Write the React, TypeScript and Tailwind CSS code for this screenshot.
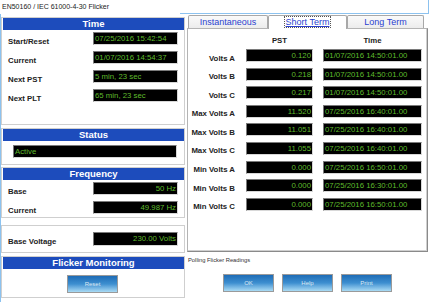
const timeRows = [
  ["Start/Reset", "07/25/2016 15:42:54"],
  ["Current", "01/07/2016 14:54:37"],
  ["Next PST", "5 min, 23 sec"],
  ["Next PLT", "65 min, 23 sec"],
];

const stRows = [
  ["Volts A", "0.120", "01/07/2016 14:50:01.00"],
  ["Volts B", "0.218", "01/07/2016 14:50:01.00"],
  ["Volts C", "0.217", "01/07/2016 14:50:01.00"],
  ["Max Volts A", "11.520", "07/25/2016 16:40:01.00"],
  ["Max Volts B", "11.051", "07/25/2016 16:40:01.00"],
  ["Max Volts C", "11.055", "07/25/2016 16:40:01.00"],
  ["Min Volts A", "0.000", "07/25/2016 16:50:01.00"],
  ["Min Volts B", "0.000", "07/25/2016 16:30:01.00"],
  ["Min Volts C", "0.000", "07/25/2016 16:50:01.00"],
];

function Header({ title }: { title: string }) {
  return (
    <div className="h-[12px] bg-[#1d4cbc] text-white font-bold text-[9.5px] leading-[12px] text-center">
      {title}
    </div>
  );
}

function Readout({
  value,
  right,
  className,
}: {
  value: string;
  right?: boolean;
  className: string;
}) {
  return (
    <div
      className={`bg-black border border-t-[#7a7a7a] border-l-[#7a7a7a] border-b-[#d8d8d8] border-r-[#d8d8d8] text-[#5fba2c] text-[7.8px] leading-[11px] px-px whitespace-nowrap overflow-hidden ${
        right ? "text-right" : "text-left"
      } ${className}`}
    >
      {value}
    </div>
  );
}

function Label({ text }: { text: string }) {
  return <span className="font-bold text-[7.8px] text-[#222]">{text}</span>;
}

function BlueButton({ label }: { label: string }) {
  return (
    <button className="w-[51px] h-[18px] border border-[#9a9a9a] bg-gradient-to-b from-[#1e6cb6] via-[#3d8fd0] to-[#a9dbf4] text-[#dde8f2] text-[6px] leading-none">
      {label}
    </button>
  );
}

export default function App() {
  return (
    <div className="relative w-[429px] h-[302px] bg-white overflow-hidden font-['Liberation_Sans',Arial,sans-serif] text-[#111]">
      {/* window edges */}
      <div className="absolute left-0 top-[14px] w-px h-[288px] bg-[#8cc2ef]" />
      <div className="absolute left-[180px] top-[13px] w-[249px] h-px bg-[#8cc2ef]" />
      <div className="absolute right-0 top-0 w-px h-[14px] bg-[#8cc2ef]" />

      <div className="h-[14px] pl-[2px] text-[7px] leading-[14px] text-[#222]">
        EN50160 / IEC 61000-4-30 Flicker
      </div>

      <div className="flex">
        {/* left column */}
        <div className="w-[184px] ml-px pt-[3px] flex flex-col">
          <div className="h-[108px] border border-[#cfcfcf] pl-px">
            <Header title="Time" />
            <div className="flex flex-col gap-[6px] pt-[2px]">
              {timeRows.map(([l, v]) => (
                <div key={l} className="flex items-center h-[13px] pl-[5px]">
                  <div className="w-[85px]">
                    <Label text={l} />
                  </div>
                  <Readout value={v} className="w-[85px] h-[13px]" />
                </div>
              ))}
            </div>
          </div>

          <div className="h-[37px] mt-[3px] border border-[#cfcfcf] pl-px">
            <Header title="Status" />
            <div className="pt-[4px] pl-[10px]">
              <Readout value="Active" className="w-[164px] h-[13px]" />
            </div>
          </div>

          <div className="h-[51px] mt-[2px] border border-[#cfcfcf] pl-px">
            <Header title="Frequency" />
            <div className="flex flex-col gap-[6px] pt-[2px]">
              {[
                ["Base", "50 Hz"],
                ["Current", "49.987 Hz"],
              ].map(([l, v]) => (
                <div key={l} className="flex items-center h-[13px] pl-[5px]">
                  <div className="w-[85px]">
                    <Label text={l} />
                  </div>
                  <Readout value={v} right className="w-[85px] h-[13px]" />
                </div>
              ))}
            </div>
          </div>

          <div className="h-[28px] mt-[7px] border border-[#cfcfcf] flex items-center pl-[6px]">
            <div className="w-[85px]">
              <Label text="Base Voltage" />
            </div>
            <Readout value="230.00 Volts" right className="w-[85px] h-[14px]" />
          </div>

          <div className="h-[42px] mt-[3px] border border-[#cfcfcf] pl-px">
            <Header title="Flicker Monitoring" />
            <div className="flex justify-center pt-[6px] pr-[2px]">
              <BlueButton label="Reset" />
            </div>
          </div>
        </div>

        {/* right column */}
        <div className="w-[241px] ml-[2px] flex flex-col">
          <div className="flex h-[14px] items-end pl-px">
            <div className="w-[80px] h-[13px] border border-b-0 border-[#a8a8a8] rounded-t-[2px] bg-gradient-to-b from-[#fafafa] to-[#ececec] text-[#2a3fd0] text-[9px] leading-[12px] text-center">
              Instantaneous
            </div>
            <div className="w-[79px] h-[14px] border border-b-0 border-[#a8a8a8] rounded-t-[2px] bg-white text-[#2a3fd0] text-[9px] leading-[13px] text-center relative z-10 -mb-px">
              <span className="underline outline outline-1 outline-dotted outline-[#555] px-px">
                Short Term
              </span>
            </div>
            <div className="w-[77px] h-[13px] border border-b-0 border-[#a8a8a8] rounded-t-[2px] bg-gradient-to-b from-[#fafafa] to-[#ececec] text-[#2a3fd0] text-[9px] leading-[12px] text-center">
              Long Term
            </div>
          </div>
          <div className="h-[224px] border border-[#b4b4b4] border-r-[#8a8a8a] border-b-[#8a8a8a] shadow-[inset_-1px_-1px_0_#cfcfcf]">
            <div className="flex h-[20px] items-center font-bold text-[7.8px] text-[#222] pt-[4px]">
              <div className="w-[58px]" />
              <div className="w-[67px] text-center">PST</div>
              <div className="w-[10px]" />
              <div className="w-[99px] text-center">Time</div>
            </div>
            <div className="flex flex-col gap-[5.6px]">
              {stRows.map(([l, p, t]) => (
                <div key={l} className="flex items-center h-[13px]">
                  <div className="w-[47px] text-right whitespace-nowrap">
                    <Label text={l} />
                  </div>
                  <div className="w-[11px]" />
                  <Readout value={p} right className="w-[67px] h-[13px]" />
                  <div className="w-[10px]" />
                  <Readout value={t} className="w-[99px] h-[13px]" />
                </div>
              ))}
            </div>
          </div>
          <div className="h-[14px] pl-px pt-[3px] text-[5.8px] leading-[10px] text-[#333]">
            Polling Flicker Readings
          </div>
          <div className="flex gap-[8px] pl-[36px] pt-[8px]">
            <BlueButton label="OK" />
            <BlueButton label="Help" />
            <BlueButton label="Print" />
          </div>
        </div>
      </div>
    </div>
  );
}
